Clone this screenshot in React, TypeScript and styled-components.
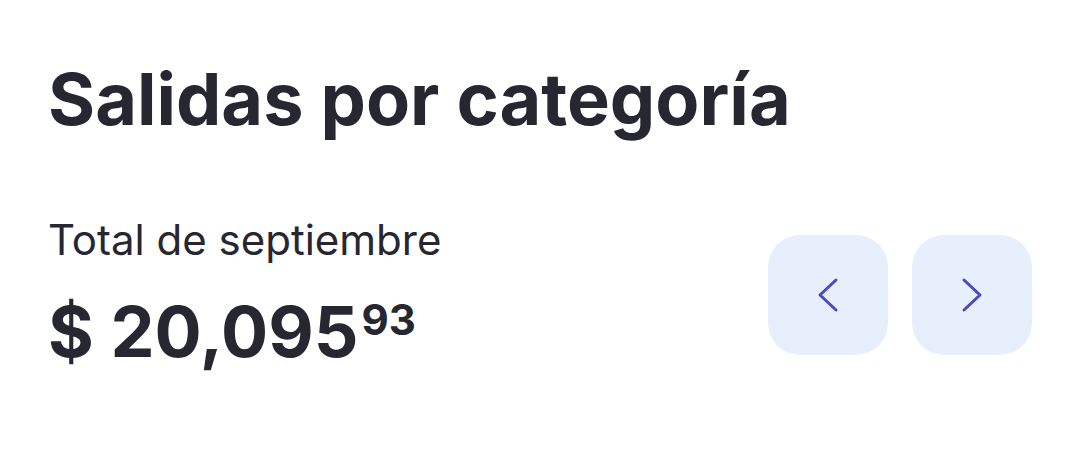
import React from 'react';
import styled, { createGlobalStyle } from 'styled-components';

const GlobalStyle = createGlobalStyle`
  body {
    margin: 0;
    background: #ffffff;
    font-family: Inter, "Noto Sans", sans-serif;
    color: #272732;
  }
`;

const Card = styled.section`
  padding: 55px 47px 0 48px;
`;

const Title = styled.h1`
  margin: 0;
  font-size: 72px;
  font-weight: 700;
  line-height: 88px;
`;

const Summary = styled.div`
  display: flex;
  align-items: flex-start;
  justify-content: space-between;
  margin-top: 72px;
`;

const Label = styled.p`
  margin: 0;
  font-size: 42px;
  line-height: 50px;
  font-weight: 400;
`;

const Amount = styled.p`
  margin: 27px 0 0 0;
  font-size: 70px;
  line-height: 80px;
  font-weight: 700;
`;

const Cents = styled.span`
  display: inline-block;
  margin-left: 3px;
  font-size: 42px;
  line-height: 42px;
  font-weight: 700;
  vertical-align: top;
  position: relative;
  top: 7px;
`;

const Pager = styled.div`
  display: flex;
  gap: 24px;
  margin-top: 20px;
`;

const NavButton = styled.button`
  width: 120px;
  height: 120px;
  border: none;
  border-radius: 32px;
  background: #e8effc;
  display: flex;
  align-items: center;
  justify-content: center;
  padding: 0;
  cursor: pointer;
`;

const Chevron = ({ dir }: { dir: 'left' | 'right' }) => (
  <svg width="48" height="48" viewBox="0 0 48 48" fill="none" stroke="#4849c8" strokeWidth="3" strokeLinecap="round" strokeLinejoin="round">
    {dir === 'left' ? <path d="M32 9 16 24l16 15" /> : <path d="m16 9 16 15-16 15" />}
  </svg>
);

const App = () => (
  <>
    <GlobalStyle />
    <Card>
      <Title>Salidas por categoría</Title>
      <Summary>
        <div>
          <Label>Total de septiembre</Label>
          <Amount>
            $ 20,095<Cents>93</Cents>
          </Amount>
        </div>
        <Pager>
          <NavButton aria-label="Mes anterior">
            <Chevron dir="left" />
          </NavButton>
          <NavButton aria-label="Mes siguiente">
            <Chevron dir="right" />
          </NavButton>
        </Pager>
      </Summary>
    </Card>
  </>
);

export default App;
